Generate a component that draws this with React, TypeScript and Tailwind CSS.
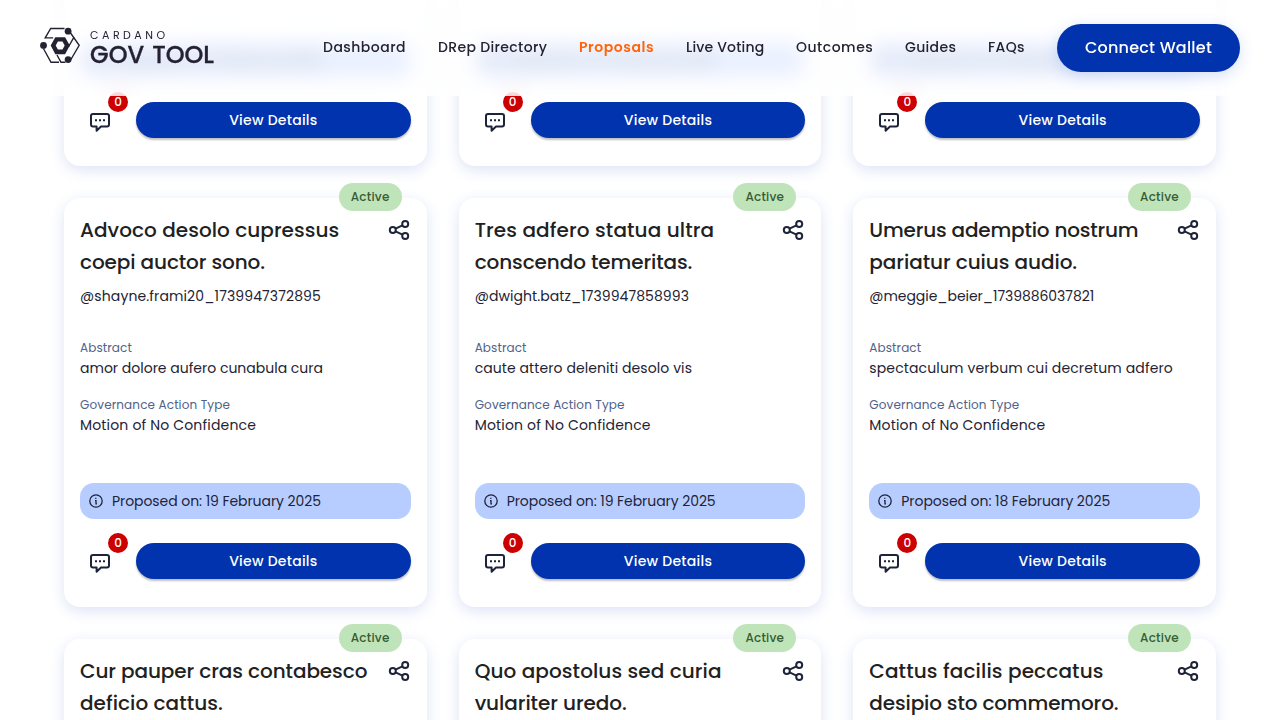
import React from "react";

type Line = { text: string; cls: string };

type Proposal = {
  title?: Line[];
  author?: Line;
  abstract?: Line;
  date?: string;
};

const proposals: Proposal[] = [
  { date: "19 February 2025" },
  { date: "19 February 2025" },
  { date: "19 February 2025" },
  {
    title: [
      { text: "Advoco desolo cupressus", cls: "tracking-[0.06px]" },
      { text: "coepi auctor sono.", cls: "tracking-[-0.1px]" },
    ],
    author: { text: "@shayne.frami20_1739947372895", cls: "tracking-[0.12px]" },
    abstract: { text: "amor dolore aufero cunabula cura", cls: "" },
    date: "19 February 2025",
  },
  {
    title: [
      { text: "Tres adfero statua ultra", cls: "tracking-[0.12px]" },
      { text: "conscendo temeritas.", cls: "tracking-[-0.1px]" },
    ],
    author: { text: "@dwight.batz_1739947858993", cls: "tracking-[0.07px]" },
    abstract: { text: "caute attero deleniti desolo vis", cls: "tracking-[0.08px]" },
    date: "19 February 2025",
  },
  {
    title: [
      { text: "Umerus ademptio nostrum", cls: "tracking-[-0.18px]" },
      { text: "pariatur cuius audio.", cls: "tracking-[-0.06px]" },
    ],
    author: { text: "@meggie_beier_1739886037821", cls: "tracking-[-0.05px]" },
    abstract: { text: "spectaculum verbum cui decretum adfero", cls: "tracking-[0.13px]" },
    date: "18 February 2025",
  },
  {
    title: [
      { text: "Cur pauper cras contabesco", cls: "tracking-[-0.08px]" },
      { text: "deficio cattus.", cls: "tracking-[0.06px]" },
    ],
  },
  {
    title: [
      { text: "Quo apostolus sed curia", cls: "tracking-[0.09px]" },
      { text: "vulariter uredo.", cls: "tracking-[-0.06px]" },
    ],
  },
  {
    title: [
      { text: "Cattus facilis peccatus", cls: "tracking-[0.13px]" },
      { text: "desipio sto commemoro.", cls: "tracking-[-0.14px]" },
    ],
  },
];

const nav = [
  { label: "Dashboard", cls: "w-[83px] tracking-[0.47px]" },
  { label: "DRep Directory", cls: "w-[109px] tracking-[0.35px]" },
  { label: "Proposals", cls: "w-[75px] font-semibold tracking-[0.55px] text-[#ff640a]" },
  { label: "Live Voting", cls: "w-[78px] tracking-[0.18px]" },
  { label: "Outcomes", cls: "w-[77px] tracking-[0.5px]" },
  { label: "Guides", cls: "w-[51px] tracking-[0.33px]" },
  { label: "FAQs", cls: "w-[37px] tracking-[0.35px]" },
];

function ShareIcon() {
  return (
    <svg width="24" height="24" viewBox="0 0 24 24" fill="none" stroke="#1d2439" strokeWidth="2">
      <circle cx="5.8" cy="12" r="3" />
      <circle cx="18.2" cy="6" r="3" />
      <circle cx="18.2" cy="18" r="3" />
      <path d="M8.5 10.6 15.5 7.3M8.5 13.4l7 3.3" />
    </svg>
  );
}

function CommentIcon() {
  return (
    <svg width="24" height="24" viewBox="0 0 24 24" fill="none" stroke="#1d2439" strokeWidth="2" strokeLinejoin="round">
      <path d="M5 4h14a2 2 0 0 1 2 2v8.5a2 2 0 0 1-2 2h-6l-4.4 4.2v-4.2H5a2 2 0 0 1-2-2V6a2 2 0 0 1 2-2Z" />
      <path d="M7 10.2h2M11 10.2h2M15 10.2h2" />
    </svg>
  );
}

function InfoIcon() {
  return (
    <svg width="16" height="16" viewBox="0 0 16 16" fill="none" stroke="#1d2439" strokeWidth="1.3">
      <circle cx="8" cy="8" r="6.2" />
      <path d="M7 7.6h1v3.2h1" />
      <path d="M7.2 5.4h1.2" />
    </svg>
  );
}

function LogoMark() {
  return (
    <svg width="40" height="37" viewBox="0 0 40 37" fill="none" stroke="#242232" strokeWidth="1.4">
      <path d="M24.5 1.5H10.7L5.2 10.9H13.2" />
      <path d="M3.4 21.5 11 35.3H19" />
      <path d="M30.2 5.5 39.2 18.3 30 34" />
      <path d="M34 10.2 28.4 20" />
      <path d="M17 28 21 35.3H25.5" />
      <path
        d="M15.3 10.2h9.8l4.7 8.4-4.7 8.6h-9.8L10.7 18.6ZM17.9 14.6l-2.2 4 2.2 4h4.6l2.2-4-2.2-4Z"
        fill="#242232"
        fillRule="evenodd"
        stroke="none"
      />
      <g fill="#242232" stroke="none">
        <circle cx="28.1" cy="4.2" r="3.4" />
        <circle cx="3.5" cy="18.4" r="3.4" />
        <circle cx="28.1" cy="32.6" r="3.4" />
      </g>
    </svg>
  );
}

function Card({ title, author, abstract, date }: Proposal) {
  return (
    <article className="relative flex h-[409px] flex-col rounded-2xl bg-white px-4 pt-4 pb-7 shadow-[0_4px_15px_#dde3f5]">
      {title && (
        <>
          <span className="absolute -top-[15px] right-[25px] flex h-7 w-[63px] items-center justify-center rounded-full bg-[#c0e4ba] text-xs font-medium tracking-[0.22px] text-[#365c34]">
            Active
          </span>
          <div className="flex items-start justify-between">
            <h2 className="text-xl leading-8 font-medium whitespace-nowrap text-[#212121]">
              {title.map((l) => (
                <span key={l.text} className={`block ${l.cls}`}>
                  {l.text}
                </span>
              ))}
            </h2>
            <div className="mt-1 -ml-6 shrink-0">
              <ShareIcon />
            </div>
          </div>
        </>
      )}
      {author && <p className={`mt-2 text-sm leading-5 whitespace-nowrap ${author.cls}`}>{author.text}</p>}
      {abstract && (
        <>
          <p className="mt-[34px] text-xs leading-4 tracking-[0.1px] text-[#506288]">Abstract</p>
          <p className={`mt-0.5 text-sm leading-5 whitespace-nowrap ${abstract.cls}`}>{abstract.text}</p>
          <p className="mt-[19px] text-xs leading-4 tracking-[0.13px] text-[#506288]">Governance Action Type</p>
          <p className="mt-0.5 text-sm leading-5 tracking-[0.17px]">Motion of No Confidence</p>
        </>
      )}
      {date && (
        <div className="mt-auto">
          <div className="flex h-9 items-center gap-2 rounded-[14px] bg-[#b8cdff] px-2 text-sm tracking-[-0.07px] text-[#1d2439]">
            <InfoIcon />
            <span>Proposed on: {date}</span>
          </div>
          <div className="mt-6 flex h-9 items-center gap-4">
            <div className="relative flex h-10 w-10 shrink-0 items-center justify-center pt-1">
              <CommentIcon />
              <span className="absolute -top-2 -right-2 flex h-5 w-5 items-center justify-center rounded-full bg-[#cc0000] text-xs font-medium text-white">
                0
              </span>
            </div>
            <button className="h-9 flex-1 rounded-full bg-[#0033ad] text-sm font-medium tracking-[0.25px] text-white shadow-[0_2px_2px_rgba(0,0,0,0.25)]">
              View Details
            </button>
          </div>
        </div>
      )}
    </article>
  );
}

export default function App() {
  return (
    <div className="relative h-[720px] w-[1280px] overflow-hidden bg-white font-['Poppins','Inter',sans-serif] text-[#242232]">
      <header className="absolute inset-x-0 top-0 z-10 flex h-24 items-center justify-between bg-white/70 px-10 backdrop-blur-[10px]">
        <div className="flex items-center gap-2.5 pb-[5px]">
          <LogoMark />
          <div className="flex flex-col pt-[4px]">
            <span className="text-[11px] leading-[12px] tracking-[3.5px]">CARDANO</span>
            <span className="mt-[2px] text-2xl leading-6 font-medium whitespace-nowrap [-webkit-text-stroke:0.3px_#242232]">
              <span className="tracking-[0.1px] [word-spacing:1.5px]">GOV </span>
              <span className="tracking-[0px]">TOOL</span>
            </span>
          </div>
        </div>
        <div className="flex items-center gap-8">
          <nav className="flex gap-8 pb-0.5 text-sm font-medium">
            {nav.map((n) => (
              <a key={n.label} className={`whitespace-nowrap ${n.cls}`}>
                {n.label}
              </a>
            ))}
          </nav>
          <button className="h-12 w-[183px] rounded-full bg-[#0033ad] text-base font-medium tracking-[0.22px] text-white shadow-[0_4px_15px_rgba(47,98,220,0.2)]">
            Connect Wallet
          </button>
        </div>
      </header>
      <main className="-mt-[243px] grid grid-cols-3 gap-8 px-16">
        {proposals.map((p, i) => (
          <Card key={i} {...p} />
        ))}
      </main>
    </div>
  );
}
